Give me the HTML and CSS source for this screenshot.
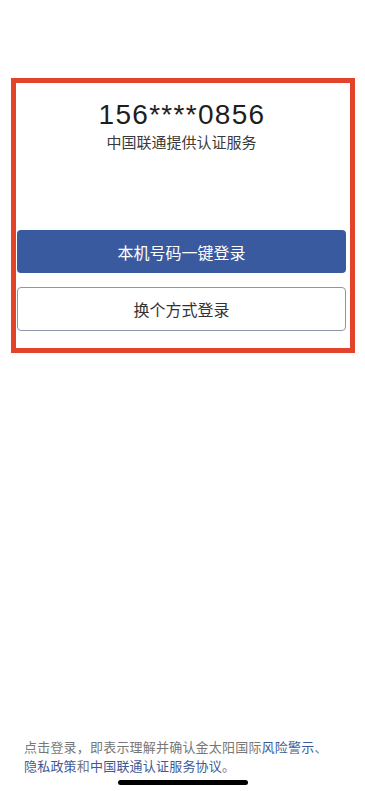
FILE: index.html
```html
<!DOCTYPE html>
<html lang="zh-CN">
<head>
<meta charset="utf-8">
<title>登录</title>
<link rel="stylesheet" href="styles.css">
</head>
<body>
<div class="page">
  <div class="card">
    <div class="phone">156****0856</div>
    <div class="provider">中国联通提供认证服务</div>
    <div class="btn btn-primary">本机号码一键登录</div>
    <div class="btn btn-outline">换个方式登录</div>
  </div>
  <div class="footer">
    <p class="terms">点击登录，即表示理解并确认金太阳国际<span class="link">风险警示</span>、<br><span class="link">隐私政策</span>和<span class="link">中国联通认证服务协议</span>。</p>
    <div class="home-indicator"></div>
  </div>
</div>
</body>
</html>
```
FILE: styles.css
```css
html, body {
  margin: 0;
  padding: 0;
  background: #ffffff;
}
.page {
  height: 791px;
  display: flex;
  flex-direction: column;
  font-family: "Liberation Sans", "Noto Sans CJK SC", sans-serif;
}
.card {
  margin: 78px 0 0 11px;
  width: 329px;
  border: 5px solid #e4432b;
  padding: 16px 4px 17px 1px;
  display: flex;
  flex-direction: column;
  align-items: center;
}
.phone {
  font-size: 28px;
  line-height: 32px;
  color: #1e1e1e;
  letter-spacing: 1.3px;
  margin-left: 1px;
}
.provider {
  margin-top: 1px;
  font-family: "Noto Sans CJK SC", sans-serif;
  font-size: 15px;
  line-height: 20px;
  color: #3a3a3a;
}
.btn {
  align-self: stretch;
  box-sizing: border-box;
  display: flex;
  align-items: center;
  justify-content: center;
  border-radius: 4px;
  font-family: "Noto Sans CJK SC", sans-serif;
  font-size: 16px;
}
.btn-primary {
  margin-top: 78px;
  height: 43px;
  background: #3a5a9f;
  color: #ffffff;
}
.btn-outline {
  margin-top: 14px;
  height: 44px;
  border: 1px solid #8e96ad;
  color: #333333;
}
.footer {
  margin-top: auto;
  display: flex;
  flex-direction: column;
  align-items: center;
  padding-bottom: 6px;
}
.terms {
  margin: 0;
  align-self: stretch;
  padding-left: 24px;
  font-family: "Noto Sans CJK SC", sans-serif;
  font-size: 13px;
  letter-spacing: 0.2px;
  line-height: 19px;
  color: #777777;
}
.link {
  color: #3d5a96;
}
.home-indicator {
  margin-top: 5px;
  width: 130px;
  height: 5px;
  border-radius: 3px;
  background: #000000;
}
```
